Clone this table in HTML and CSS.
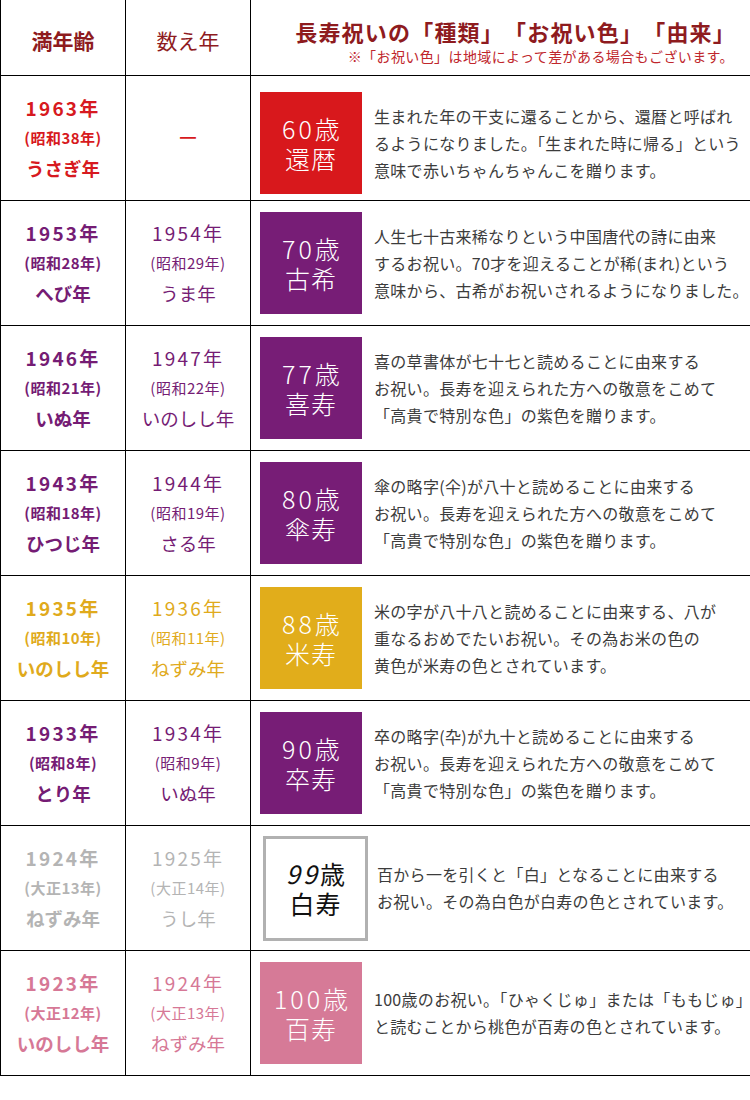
FILE: index.html
```html
<!DOCTYPE html>
<html lang="ja">
<head>
<meta charset="utf-8">
<title>長寿祝い</title>
<link rel="stylesheet" href="styles.css">
</head>
<body>
<table class="chart">
  <colgroup><col class="c1"><col class="c2"><col class="c3"></colgroup>
  <thead>
    <tr class="head">
      <th class="h-age">満年齢</th>
      <th class="h-kazoe">数え年</th>
      <th class="h-title">
        <div class="title">長寿祝いの「種類」「お祝い色」「由来」</div>
        <div class="note">※「お祝い色」は地域によって差がある場合もございます。</div>
      </th>
    </tr>
  </thead>
  <tbody>
    <tr class="red">
      <td class="yr bold"><span class="y">1963年</span><span class="era">(昭和38年)</span><span class="eto">うさぎ年</span></td>
      <td class="yr"><span class="dash">ー</span></td>
      <td class="info first"><div class="row"><div class="badge"><span class="age">60歳</span><span>還暦</span></div><p class="desc">生まれた年の干支に還ることから、還暦と呼ばれ<br>るようになりました。「生まれた時に帰る」という<br>意味で赤いちゃんちゃんこを贈ります。</p></div></td>
    </tr>
    <tr class="purple">
      <td class="yr bold"><span class="y">1953年</span><span class="era">(昭和28年)</span><span class="eto">へび年</span></td>
      <td class="yr"><span class="y">1954年</span><span class="era">(昭和29年)</span><span class="eto">うま年</span></td>
      <td class="info"><div class="row"><div class="badge"><span class="age">70歳</span><span>古希</span></div><p class="desc">人生七十古来稀なりという中国唐代の詩に由来<br>するお祝い。70才を迎えることが稀(まれ)という<br>意味から、古希がお祝いされるようになりました。</p></div></td>
    </tr>
    <tr class="purple">
      <td class="yr bold"><span class="y">1946年</span><span class="era">(昭和21年)</span><span class="eto">いぬ年</span></td>
      <td class="yr"><span class="y">1947年</span><span class="era">(昭和22年)</span><span class="eto">いのしし年</span></td>
      <td class="info"><div class="row"><div class="badge"><span class="age">77歳</span><span>喜寿</span></div><p class="desc">喜の草書体が七十七と読めることに由来する<br>お祝い。長寿を迎えられた方への敬意をこめて<br>「高貴で特別な色」の紫色を贈ります。</p></div></td>
    </tr>
    <tr class="purple">
      <td class="yr bold"><span class="y">1943年</span><span class="era">(昭和18年)</span><span class="eto">ひつじ年</span></td>
      <td class="yr"><span class="y">1944年</span><span class="era">(昭和19年)</span><span class="eto">さる年</span></td>
      <td class="info"><div class="row"><div class="badge"><span class="age">80歳</span><span>傘寿</span></div><p class="desc">傘の略字(仐)が八十と読めることに由来する<br>お祝い。長寿を迎えられた方への敬意をこめて<br>「高貴で特別な色」の紫色を贈ります。</p></div></td>
    </tr>
    <tr class="gold">
      <td class="yr bold"><span class="y">1935年</span><span class="era">(昭和10年)</span><span class="eto">いのしし年</span></td>
      <td class="yr"><span class="y">1936年</span><span class="era">(昭和11年)</span><span class="eto">ねずみ年</span></td>
      <td class="info"><div class="row"><div class="badge"><span class="age">88歳</span><span>米寿</span></div><p class="desc">米の字が八十八と読めることに由来する、八が<br>重なるおめでたいお祝い。その為お米の色の<br>黄色が米寿の色とされています。</p></div></td>
    </tr>
    <tr class="purple">
      <td class="yr bold"><span class="y">1933年</span><span class="era">(昭和8年)</span><span class="eto">とり年</span></td>
      <td class="yr"><span class="y">1934年</span><span class="era">(昭和9年)</span><span class="eto">いぬ年</span></td>
      <td class="info"><div class="row"><div class="badge"><span class="age">90歳</span><span>卒寿</span></div><p class="desc">卒の略字(卆)が九十と読めることに由来する<br>お祝い。長寿を迎えられた方への敬意をこめて<br>「高貴で特別な色」の紫色を贈ります。</p></div></td>
    </tr>
    <tr class="gray">
      <td class="yr bold"><span class="y">1924年</span><span class="era">(大正13年)</span><span class="eto">ねずみ年</span></td>
      <td class="yr"><span class="y">1925年</span><span class="era">(大正14年)</span><span class="eto">うし年</span></td>
      <td class="info"><div class="row"><div class="badge white"><span class="age"><i>99</i>歳</span><span>白寿</span></div><p class="desc">百から一を引くと「白」となることに由来する<br>お祝い。その為白色が白寿の色とされています。</p></div></td>
    </tr>
    <tr class="pink">
      <td class="yr bold"><span class="y">1923年</span><span class="era">(大正12年)</span><span class="eto">いのしし年</span></td>
      <td class="yr"><span class="y">1924年</span><span class="era">(大正13年)</span><span class="eto">ねずみ年</span></td>
      <td class="info"><div class="row"><div class="badge"><span class="age">100歳</span><span>百寿</span></div><p class="desc">100歳のお祝い。「ひゃくじゅ」または「ももじゅ」<br>と読むことから桃色が百寿の色とされています。</p></div></td>
    </tr>
  </tbody>
</table>
</body>
</html>
```

FILE: styles.css
```css
html, body {
  margin: 0;
  padding: 0;
  background: #fff;
}

body {
  font-family: "Noto Sans CJK JP", "Noto Sans", sans-serif;
  color: #3c3c3c;
}

.chart {
  width: 750px;
  border-collapse: collapse;
  table-layout: fixed;
}

.c1, .c2 { width: 125px; }
.c3 { width: 500px; }

.chart th, .chart td {
  border: 1px solid #000;
  padding: 0;
}

.chart thead th {
  border-top: none;
  height: 69px;
  color: #8e1b1e;
  font-size: 21px;
  vertical-align: middle;
  padding-top: 4px;
}

.h-age { font-weight: 700; }
.h-kazoe { font-weight: 400; }

.chart thead th.h-title {
  text-align: right;
  padding-right: 14px;
  padding-top: 6px;
  text-spacing-trim: space-all;
}

.title {
  font-weight: 700;
  font-size: 22px;
  line-height: 30px;
  letter-spacing: 1.2px;
}

.note {
  font-weight: 400;
  font-size: 14px;
  line-height: 20px;
  color: #c0262c;
  margin-right: 2px;
  letter-spacing: 0.4px;
}

.chart tbody td { height: 124px; }

.yr {
  text-align: center;
  vertical-align: middle;
}

.yr span { display: block; }

.y {
  font-size: 19px;
  line-height: 30px;
  letter-spacing: 2.2px;
}

.era {
  font-size: 15px;
  line-height: 30px;
  letter-spacing: 0.5px;
}

.eto {
  font-size: 18.5px;
  line-height: 30px;
}

.bold { font-weight: 700; }

.dash {
  font-size: 20px;
  line-height: 30px;
}

.info { vertical-align: middle; }
.info.first .row { padding-top: 10px; }

.row {
  display: flex;
  align-items: center;
  padding-left: 9px;
}

.badge {
  flex: none;
  width: 102px;
  height: 102px;
  box-sizing: border-box;
  display: flex;
  flex-direction: column;
  align-items: center;
  justify-content: center;
  color: #fff;
  font-size: 25px;
  font-weight: 300;
  line-height: 30px;
  letter-spacing: 1px;
}

.badge .age { letter-spacing: 3px; margin-right: -3px; }

.badge.white {
  width: 105px;
  height: 105px;
  margin-left: 3px;
  margin-right: -3px;
  background: #fff;
  border: 3px solid #b1b1b1;
  color: #111;
  font-weight: 400;
}

.badge.white i { font-style: italic; letter-spacing: 3px; }

.desc {
  margin: 0 0 0 12px;
  font-size: 16px;
  line-height: 27px;
  letter-spacing: 0.3px;
  white-space: nowrap;
  color: #3c3c3c;
}

.red .yr { color: #d71920; }
.red .badge { background: #d8181c; }

.purple .yr { color: #751c74; }
.purple .badge { background: #771d76; }

.gold .yr { color: #e0aa1c; }
.gold .badge { background: #e1ad1b; }

.gray .yr { color: #b4b4b4; }

.pink .yr { color: #d67896; }
.pink .badge { background: #d67a97; }
```
